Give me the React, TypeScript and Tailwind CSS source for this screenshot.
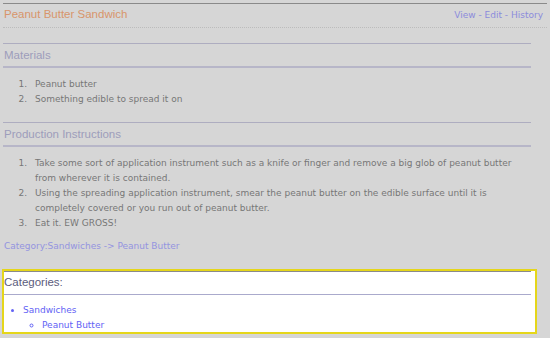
import React from "react";

const materials = ["Peanut butter", "Something edible to spread it on"];

const steps = [
  "Take some sort of application instrument such as a knife or finger and remove a big glob of peanut butter from wherever it is contained.",
  "Using the spreading application instrument, smear the peanut butter on the edible surface until it is completely covered or you run out of peanut butter.",
  "Eat it. EW GROSS!",
];

const head = "font-['Liberation_Sans',Arial,sans-serif] text-[11.5px] leading-[14px]";
const body = "font-['DejaVu_Sans',Verdana,sans-serif] text-[9px] leading-[15px]";

function Section({ title }: { title: string }) {
  return (
    <div
      className={`w-[528px] border-t border-[#aeadc0] border-b-2 border-b-[#b7b6c8] pt-[4px] pb-[4px] pl-[1px] text-[#9d9dbb] ${head}`}
    >
      {title}
    </div>
  );
}

function Steps({ items }: { items: string[] }) {
  return (
    <ol className={`mt-[9px] w-[525px] text-[#777777] ${body}`}>
      {items.map((s, i) => (
        <li key={i} className="flex">
          <span className="w-[32px] shrink-0 pr-[8px] text-right">{i + 1}.</span>
          <span>{s}</span>
        </li>
      ))}
    </ol>
  );
}

export default function App() {
  return (
    <div className="min-h-[338px] bg-[#d6d6d6] pl-[3px] pt-[3px]">
      {/* page header */}
      <div className="w-[544px] border-t border-[#8a8a8a]">
        <div className="flex items-baseline justify-between border-b border-dotted border-[#bcbcbc] pl-[1px] pr-[4px] pt-[3px] pb-[4px]">
          <div className={`text-[#d8956b] ${head}`}>Peanut Butter Sandwich</div>
          <div className={`text-[#8c8cdc] ${body}`}>
            <span>View</span> - <span>Edit</span> - <span>History</span>
          </div>
        </div>
      </div>

      <div className="mt-[15px]">
        <Section title="Materials" />
        <Steps items={materials} />
      </div>

      <div className="mt-[15px]">
        <Section title="Production Instructions" />
        <Steps items={steps} />
      </div>

      <div className={`mt-[8px] pl-[1px] text-[#9494e0] ${body}`}>
        Category:Sandwiches -&gt; Peanut Butter
      </div>

      {/* categories box */}
      <div className="-ml-[1px] mt-[15px] h-[65px] w-[535px] overflow-hidden border-2 border-[#e5d61a] bg-white">
        <div className="w-[527px] border-t border-[#8a8a8a]">
          <div
            className={`border-b border-[#aaaacc] pt-[3px] pb-[5px] text-[#5c5c7c] ${head}`}
          >
            Categories:
          </div>
        </div>
        <ul className={`mt-[8px] list-disc pl-[19px] text-[#6262f5] ${body}`}>
          <li>
            Sandwiches
            <ul className="list-[circle] pl-[19px]">
              <li>Peanut Butter</li>
            </ul>
          </li>
        </ul>
      </div>
    </div>
  );
}
